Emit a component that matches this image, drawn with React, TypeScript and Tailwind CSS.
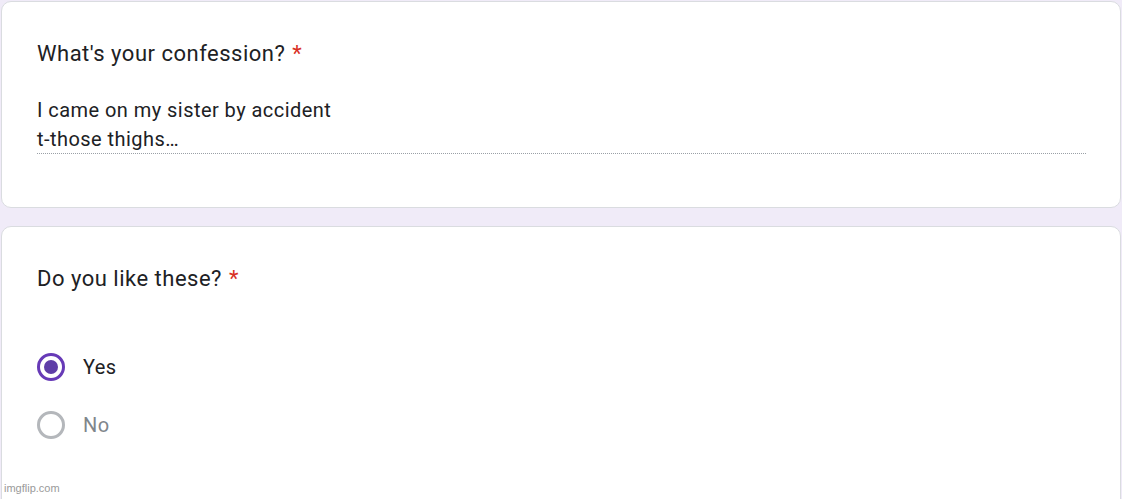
import React from 'react';

const Asterisk = () => <span className="text-[#d93025] ml-[7px]">*</span>;

const Radio: React.FC<{ checked?: boolean; label: string }> = ({ checked, label }) => (
  <div className="flex items-center h-[28px]">
    <div
      className={
        checked
          ? 'w-[28px] h-[28px] rounded-full border-[3px] border-[#673ab7] flex items-center justify-center'
          : 'w-[28px] h-[28px] rounded-full border-[3px] border-[#b4b7bb]'
      }
    >
      {checked && <div className="w-[14px] h-[14px] rounded-full bg-[#5f3ea8]" />}
    </div>
    <span
      className={
        checked
          ? 'ml-[18px] text-[20px] tracking-[0.4px] text-[#202124]'
          : 'ml-[18px] text-[20px] tracking-[0.4px] text-[#80868b]'
      }
    >
      {label}
    </span>
  </div>
);

export default function App() {
  return (
    <div className="w-[1122px] h-[499px] overflow-hidden bg-[#f0ebf8] pt-px px-px relative font-['Roboto',sans-serif]">
      <div className="bg-white border border-[#dadce0] rounded-[10px] h-[207px] pl-[35px] pr-[34px] pt-[38px]">
        <div className="text-[22px] leading-[28px] tracking-[0.5px] text-[#202124]">
          What's your confession?<Asterisk />
        </div>
        <div className="mt-[28px] text-[20px] leading-[29px] tracking-[0.45px] text-[#202124]">
          <div>I came on my sister by accident</div>
          <div>t-those thighs…</div>
        </div>
        <div className="border-b border-dotted border-[#9aa0a6] mt-[-1px]" />
      </div>
      <div className="mt-[18px] bg-white border border-[#dadce0] rounded-[10px] h-[300px] pl-[35px] pt-[38px]">
        <div className="text-[22px] leading-[28px] tracking-[0.5px] text-[#202124]">
          Do you like these?<Asterisk />
        </div>
        <div className="mt-[60px] flex flex-col gap-[30px]">
          <Radio checked label="Yes" />
          <Radio label="No" />
        </div>
      </div>
      <div className="absolute left-[4px] bottom-[3px] text-[11px] text-[#9a9a9a] font-['Liberation_Sans',sans-serif]">
        imgflip.com
      </div>
    </div>
  );
}
